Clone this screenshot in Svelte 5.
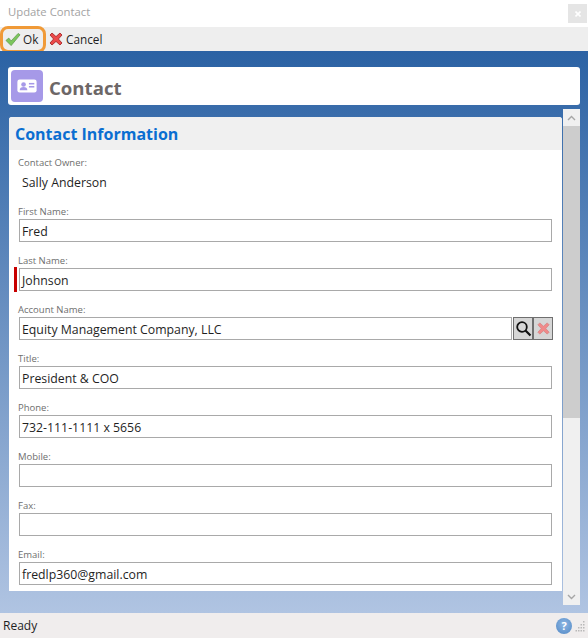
<script>
  const fields = [
    { label: "First Name:", value: "Fred" },
    { label: "Last Name:", value: "Johnson", required: true },
    { label: "Account Name:", value: "Equity Management Company, LLC", lookup: true },
    { label: "Title:", value: "President & COO" },
    { label: "Phone:", value: "732-111-1111 x 5656" },
    { label: "Mobile:", value: "" },
    { label: "Fax:", value: "" },
    { label: "Email:", value: "fredlp360@gmail.com" }
  ];
</script>

<div class="window">
  <div class="titlebar">
    <span class="title">Update Contact</span>
    <span class="close">
      <svg width="6" height="6" viewBox="0 0 6 6"><path d="M.5 .5 5.5 5.5M5.5 .5 .5 5.5" stroke="#fff" stroke-width="1.6" /></svg>
    </span>
  </div>

  <div class="toolbar">
    <button class="tool ok">
      <svg width="16" height="15" viewBox="0 0 17 16">
        <path d="M1 9 4 6.5 6.5 9.5 14 1.5 16 3 6.5 14.5Z" fill="#7cc65c" stroke="#5d9a4a" stroke-width=".8" stroke-linejoin="round" />
      </svg>
      Ok
    </button>
    <button class="tool cancel">
      <svg width="14" height="14" viewBox="0 0 14 14">
        <path d="M3 1 7 4.6 11 1 13 3 9.4 7 13 11 11 13 7 9.4 3 13 1 11 4.6 7 1 3Z" fill="#ec4a4a" stroke="#a92a2a" stroke-width=".9" stroke-linejoin="round" />
      </svg>
      Cancel
    </button>
  </div>

  <div class="content">
    <div class="page-head">
      <span class="page-icon">
        <svg width="20" height="14" viewBox="0 0 26 18">
          <rect x="0.5" y="0.5" width="25" height="17" rx="3" fill="#fff" />
          <circle cx="8.5" cy="7" r="3" fill="#a699e8" />
          <path d="M3.5 14.5c0-3 2-4.2 5-4.2s5 1.2 5 4.2Z" fill="#a699e8" />
          <rect x="15.5" y="5" width="7" height="2" fill="#a699e8" />
          <rect x="15.5" y="9" width="7" height="2" fill="#a699e8" />
        </svg>
      </span>
      <span class="page-title">Contact</span>
    </div>

    <div class="scroll-area">
      <div class="card">
        <h2>Contact Information</h2>
        <div class="form">
          <div class="owner">
            <div class="label">Contact Owner:</div>
            <div class="owner-name">Sally Anderson</div>
          </div>
          {#each fields as field}
            <div class="field">
              <div class="label">{field.label}</div>
              <div class="input-row">
                {#if field.required}<span class="required"></span>{/if}
                <div class="input">{field.value}</div>
                {#if field.lookup}
                  <span class="icon-btn">
                    <svg width="17" height="17" viewBox="0 0 17 17">
                      <circle cx="7" cy="7" r="4.8" fill="none" stroke="#111" stroke-width="1.8" />
                      <path d="M10.5 10.5 15.5 15.5" stroke="#111" stroke-width="2.2" />
                    </svg>
                  </span>
                  <span class="icon-btn">
                    <svg width="13" height="13" viewBox="0 0 14 14">
                      <path d="M3 1 7 4.6 11 1 13 3 9.4 7 13 11 11 13 7 9.4 3 13 1 11 4.6 7 1 3Z" fill="#f08a8a" stroke="#d98585" stroke-width=".9" stroke-linejoin="round" />
                    </svg>
                  </span>
                {/if}
              </div>
            </div>
          {/each}
        </div>
      </div>

      <div class="scrollbar">
        <span class="arrow">
          <svg width="9" height="6" viewBox="0 0 9 6"><path d="M1 5 4.5 1.5 8 5" fill="none" stroke="#a6a6a6" stroke-width="1.4" /></svg>
        </span>
        <span class="thumb"></span>
        <span class="track"></span>
        <span class="arrow">
          <svg width="9" height="6" viewBox="0 0 9 6"><path d="M1 1 4.5 4.5 8 1" fill="none" stroke="#a6a6a6" stroke-width="1.4" /></svg>
        </span>
      </div>
    </div>
  </div>

  <div class="statusbar">
    <span class="ready">Ready</span>
    <span class="status-right">
      <span class="help">?</span>
      <svg width="10" height="12" viewBox="0 0 10 12" fill="#b9b9b9">
        <rect x="8" y="1" width="1.5" height="1.5" />
        <rect x="5.5" y="4" width="1.5" height="1.5" /><rect x="8" y="4" width="1.5" height="1.5" />
        <rect x="3" y="7" width="1.5" height="1.5" /><rect x="5.5" y="7" width="1.5" height="1.5" /><rect x="8" y="7" width="1.5" height="1.5" />
        <rect x="0.5" y="10" width="1.5" height="1.5" /><rect x="3" y="10" width="1.5" height="1.5" /><rect x="5.5" y="10" width="1.5" height="1.5" /><rect x="8" y="10" width="1.5" height="1.5" />
      </svg>
    </span>
  </div>
</div>

<style>
  :global(body) {
    margin: 0;
  }

  .window {
    width: 588px;
    height: 638px;
    display: flex;
    flex-direction: column;
    overflow: hidden;
    font-family: "Open Sans", "Noto Sans", sans-serif;
    color: #1f1f1f;
    background: #fff;
  }

  .titlebar {
    height: 27px;
    flex: none;
    display: flex;
    justify-content: space-between;
    align-items: flex-start;
    box-sizing: border-box;
    padding: 0 1px 0 8px;
  }

  .title {
    font-size: 11.3px;
    line-height: 24px;
    color: #a3a3a3;
  }

  .close {
    width: 19px;
    height: 19px;
    margin-top: 4px;
    background: #e5e5e5;
    display: flex;
    align-items: center;
    justify-content: center;
  }

  .toolbar {
    height: 24px;
    flex: none;
    display: flex;
    align-items: center;
    gap: 3px;
    background: #eeeeee;
  }

  .tool {
    display: flex;
    align-items: center;
    gap: 3px;
    height: 24px;
    padding: 0;
    border: 0;
    background: none;
    font: inherit;
    font-size: 11.8px;
    color: #1f1f1f;
  }

  .ok {
    width: 46px;
    height: 27px;
    box-sizing: border-box;
    border: 3px solid #f09a37;
    border-radius: 8px;
    gap: 2px;
    padding-left: 2px;
  }

  .content {
    flex: 1;
    min-height: 0;
    display: flex;
    flex-direction: column;
    background: linear-gradient(#2b62a4, #b0c4e2);
    padding: 16px 8px 8px;
  }

  .page-head {
    height: 38px;
    flex: none;
    display: flex;
    align-items: center;
    gap: 6px;
    background: #fff;
    border-radius: 3px;
    padding-left: 3px;
    box-sizing: border-box;
  }

  .page-icon {
    width: 32px;
    height: 32px;
    border-radius: 4px;
    background: #a699e8;
    display: flex;
    align-items: center;
    justify-content: center;
  }

  .page-title {
    font-size: 18.6px;
    font-weight: 700;
    color: #6d6767;
    padding-top: 3px;
  }

  .scroll-area {
    flex: 1;
    min-height: 0;
    display: flex;
    justify-content: space-between;
    margin-top: 4px;
  }

  .card {
    width: 553px;
    margin: 8px 0 14px 1px;
    background: #fff;
    border-radius: 3px 3px 0 0;
    overflow: hidden;
  }

  h2 {
    margin: 0;
    height: 33px;
    padding-left: 6px;
    background: #f0f0f0;
    font-size: 16px;
    font-weight: 700;
    line-height: 35px;
    color: #0a6ed1;
  }

  .form {
    padding: 6px 10px 0 10px;
  }

  .label {
    font-size: 9.5px;
    line-height: 13px;
    color: #6e6e6e;
    margin-left: -1px;
  }

  .owner {
    height: 50px;
  }

  .owner-name {
    font-size: 12.3px;
    line-height: 20px;
    padding: 4px 0 0 3px;
  }

  .field {
    height: 49px;
  }

  .field .label {
    height: 13px;
    line-height: 11px;
  }

  .input-row {
    display: flex;
    position: relative;
  }

  .input {
    flex: 1;
    height: 23px;
    box-sizing: border-box;
    border: 1px solid #a9a9a9;
    background: #fff;
    padding-left: 2px;
    font-size: 12.3px;
    line-height: 23px;
    color: #1f1f1f;
  }

  .required {
    position: absolute;
    left: -5px;
    top: -1px;
    width: 3px;
    height: 25px;
    background: #c80000;
  }

  .icon-btn {
    width: 20px;
    height: 23px;
    margin-left: 1px;
    box-sizing: border-box;
    border: 1px solid #6f6f6f;
    background: #d6d6d6;
    display: flex;
    align-items: center;
    justify-content: center;
  }

  .icon-btn + .icon-btn {
    margin-left: 0;
    margin-right: -1px;
  }

  .scrollbar {
    width: 17px;
    display: flex;
    flex-direction: column;
    background: #f0f0f0;
  }

  .arrow {
    height: 17px;
    flex: none;
    display: flex;
    align-items: center;
    justify-content: center;
  }

  .thumb {
    height: 292px;
    flex: none;
    background: #cdcdcd;
  }

  .track {
    flex: 1;
  }

  .statusbar {
    height: 25px;
    flex: none;
    display: flex;
    align-items: center;
    justify-content: space-between;
    background: #f0eded;
    padding: 0 3px;
    font-size: 12px;
  }

  .status-right {
    display: flex;
    align-items: center;
    gap: 3px;
  }

  .help {
    width: 16px;
    height: 16px;
    border-radius: 50%;
    background: radial-gradient(circle at 50% 40%, #8fb8e4, #4f86c4);
    color: #fff;
    font-size: 11px;
    font-weight: 700;
    line-height: 16px;
    text-align: center;
  }
</style>
